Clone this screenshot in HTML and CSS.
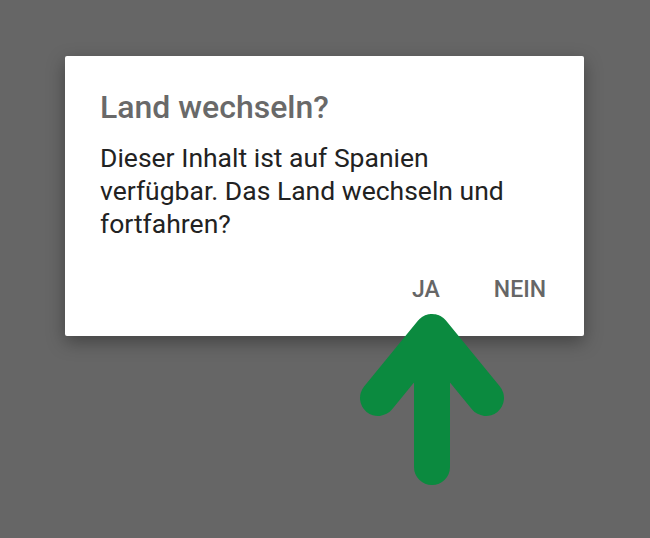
FILE: index.html
```html
<!DOCTYPE html>
<html>
<head>
    <meta charset="UTF-8">
    <title>Land wechseln?</title>
    <link rel="stylesheet" href="styles.css">
</head>
<body>
<div class="dialog">
    <h2 class="dialog-title">Land wechseln?</h2>
    <p class="dialog-text">Dieser Inhalt ist auf Spanien verfügbar. Das Land wechseln und fortfahren?</p>
    <div class="dialog-actions">
        <button class="dialog-button">JA</button>
        <button class="dialog-button">NEIN</button>
    </div>
</div>

<svg class="arrow" width="650" height="538" viewBox="0 0 650 538">
    <path d="M378 398 L432 332 L486 398 M432 332 L432 467" fill="none" stroke="#0b8a3f" stroke-width="36" stroke-linecap="round" stroke-linejoin="round"/>
</svg>
</body>
</html>
```

FILE: styles.css
```css
html, body {
    margin: 0;
    padding: 0;
    height: 100%;
}

body {
    background: #666666;
    font-family: Roboto, "Noto Sans", sans-serif;
    overflow: hidden;
}

.dialog {
    width: 519px;
    height: 280px;
    box-sizing: border-box;
    margin: 56px 0 0 65px;
    padding: 31px 35px 0 35px;
    background: white;
    border-radius: 2px;
    box-shadow: 0 6px 18px rgba(0,0,0,0.35);
}

.dialog-title {
    margin: 0;
    font-size: 32px;
    font-weight: 500;
    line-height: 40px;
    color: #696969;
}

.dialog-text {
    margin: 14px 0 0;
    font-size: 26.5px;
    line-height: 33px;
    color: #222222;
    width: 440px;
}

.dialog-actions {
    display: flex;
    justify-content: flex-end;
    gap: 54px;
    margin-top: 36px;
    padding-right: 3px;
}

.dialog-button {
    padding: 0;
    border: none;
    background: none;
    font-family: inherit;
    font-size: 23px;
    font-weight: 500;
    color: #666666;
}

.arrow {
    position: absolute;
    left: 0;
    top: 0;
}
```
